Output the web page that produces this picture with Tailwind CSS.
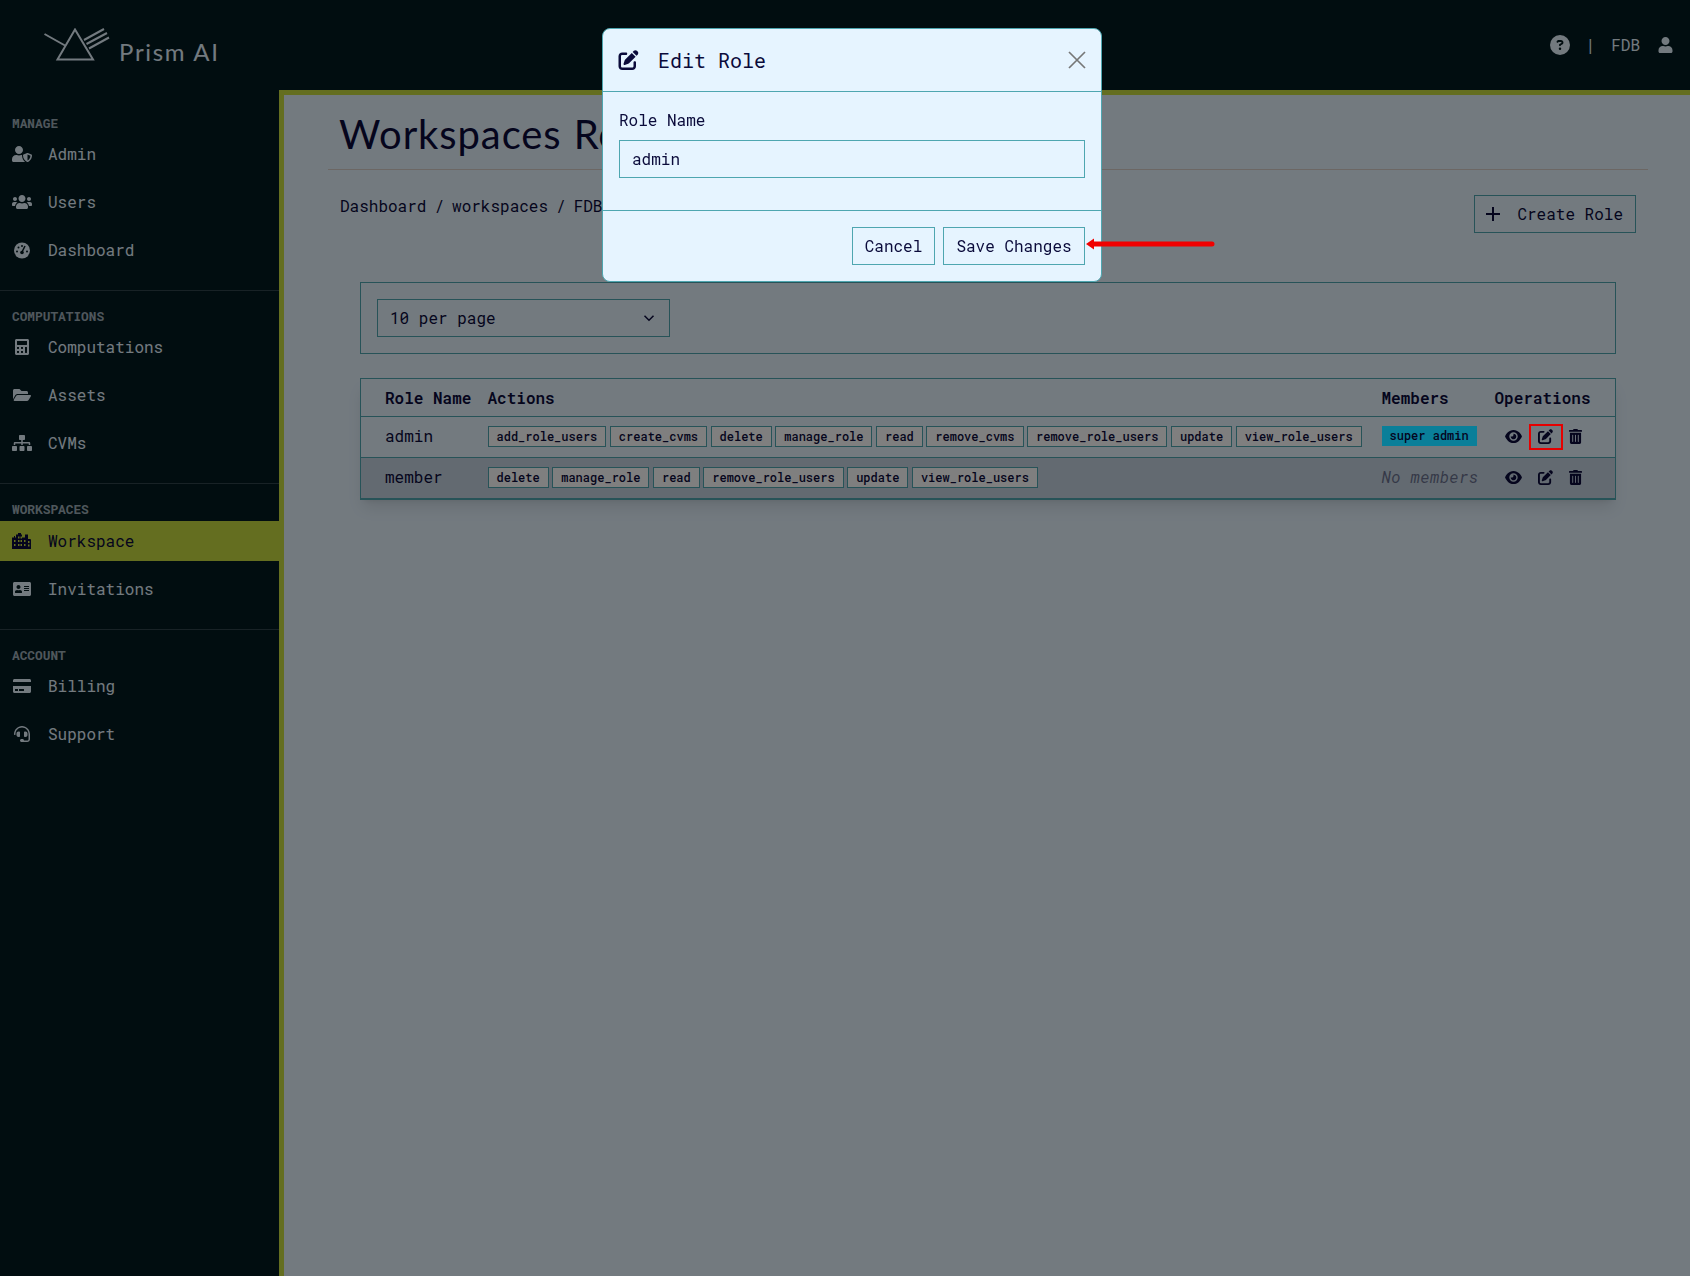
<!DOCTYPE html>
<html lang="en">
<head>
  <meta charset="UTF-8">
  <meta name="viewport" content="width=device-width, initial-scale=1.0">
  <title>Workspaces Roles</title>
  <script src="https://cdn.jsdelivr.net/npm/@tailwindcss/browser@4"></script>
</head>
<body class="bg-[#e6f4ff] text-[#0b0b3b] h-[1276px] overflow-hidden font-['Roboto_Mono','DejaVu_Sans_Mono',monospace] text-base">
  <!-- top bar -->
  <header class="h-[90px] bg-[#031a20] flex items-center justify-between text-[#e6f4ff]">
    <div class="flex items-end pl-[44px] pb-[26px] gap-[9px] h-full">
      <svg class="w-[66px] h-[36px] text-[#e6f4ff]" viewBox="0 0 66 36" fill="none" stroke="currentColor" stroke-width="2">
        <path d="M0.500 6 L21 17.500"/>
        <path d="M31 1.500 L13.500 31.500 H49 Z"/>
        <path d="M40 12 L60 1M42.500 16 L63 5M45 20.500 L65 9.500"/>
      </svg>
      <span class="font-['Lato',sans-serif] text-[24px] leading-none tracking-[1.700px]">Prism AI</span>
    </div>
    <div class="flex items-center pr-[17px]">
      <svg class="w-[20px] h-[20px]" viewBox="0 0 512 512" fill="currentColor"><path d="M256 512A256 256 0 1 0 256 0a256 256 0 1 0 0 512zM169.800 165.300c7.900-22.300 29.100-37.300 52.800-37.300h58.300c34.900 0 63.100 28.300 63.100 63.100c0 22.600-12.100 43.500-31.700 54.800L280 264.400c-.2 13-10.900 23.600-24 23.600c-13.300 0-24-10.700-24-24V250.500c0-8.600 4.600-16.500 12.100-20.800l44.300-25.400c4.700-2.700 7.600-7.700 7.600-13.100c0-8.400-6.800-15.100-15.100-15.100H222.600c-3.400 0-6.400 2.100-7.500 5.300l-.4 1.200c-4.400 12.500-18.200 19-30.600 14.600s-19-18.200-14.600-30.600l.4-1.200zM224 352a32 32 0 1 1 64 0 32 32 0 1 1 -64 0z"/></svg>
      <span class="ml-[16px]">|</span>
      <span class="ml-[16px]">FDB</span>
      <svg class="ml-[18px] w-[15px] h-[16px]" viewBox="0 0 448 512" fill="currentColor"><path d="M224 256c70.700 0 128-57.300 128-128S294.700 0 224 0 96 57.300 96 128s57.300 128 128 128zm89.600 32h-16.700c-22.200 10.200-46.900 16-72.900 16s-50.600-5.800-72.900-16h-16.700C60.200 288 0 348.200 0 422.400V464c0 26.500 21.500 48 48 48h352c26.500 0 48-21.500 48-48v-41.600c0-74.200-60.200-134.400-134.400-134.400z"/></svg>
    </div>
  </header>

  <div class="flex h-[1186px]">
    <!-- sidebar -->
    <aside class="w-[279px] shrink-0 bg-[#031a20] text-[#e6f4ff]">
      <section class="pt-[25px] pb-[20px] border-b border-[#e6f4ff]/20">
        <h6 class="h-[19px] leading-[17px] pl-[12px] text-[12.800px] font-bold text-[#e6f4ff]/70">MANAGE</h6>
        <a class="h-[40px] flex items-center pl-[12px] mb-[8px]">
          <svg class="w-[20px] h-[16px] mr-[16px]" viewBox="0 0 640 512" fill="currentColor"><path d="M622.300 271.100l-115.200-45c-4.100-1.600-12.600-3.700-22.200 0l-115.200 45c-10.700 4.200-17.700 14-17.700 24.900 0 111.600 68.700 188.800 132.900 213.900 9.600 3.700 18 1.600 22.200 0C558.400 489.900 640 420.500 640 296c0-10.900-7-20.700-17.700-24.900zM496 462.400V273.300l95.500 37.300c-5.600 87.100-60.900 135.400-95.500 151.800zM224 256c70.700 0 128-57.300 128-128S294.700 0 224 0 96 57.300 96 128s57.300 128 128 128zm96 40c0-2.500.8-4.800 1.100-7.200-2.500-.1-4.900-.8-7.500-.8h-16.700c-22.200 10.200-46.900 16-72.900 16s-50.600-5.800-72.900-16h-16.700C60.200 288 0 348.200 0 422.400V464c0 26.500 21.500 48 48 48h352c6.800 0 13.300-1.500 19.200-4-54-42.900-99.200-116.700-99.200-212z"/></svg>
          Admin
        </a>
        <a class="h-[40px] flex items-center pl-[12px] mb-[8px]">
          <svg class="w-[20px] h-[16px] mr-[16px]" viewBox="0 0 640 512" fill="currentColor"><path d="M96 224c35.300 0 64-28.700 64-64s-28.700-64-64-64-64 28.700-64 64 28.700 64 64 64zm448 0c35.300 0 64-28.700 64-64s-28.700-64-64-64-64 28.700-64 64 28.700 64 64 64zm32 32h-64c-17.600 0-33.500 7.100-45.100 18.600 40.300 22.100 68.900 62 75.100 109.400h66c17.700 0 32-14.300 32-32v-32c0-35.300-28.700-64-64-64zm-256 0c61.900 0 112-50.100 112-112S381.900 32 320 32 208 82.100 208 144s50.100 112 112 112zm76.800 32h-8.300c-20.800 10-43.900 16-68.500 16s-47.600-6-68.500-16h-8.300C179.600 288 128 339.600 128 403.200V432c0 26.500 21.500 48 48 48h288c26.500 0 48-21.500 48-48v-28.800c0-63.600-51.600-115.200-115.200-115.200zm-223.700-13.400C161.500 263.100 145.600 256 128 256H64c-35.300 0-64 28.700-64 64v32c0 17.700 14.300 32 32 32h65.900c6.300-47.400 34.900-87.300 75.200-109.400z"/></svg>
          Users
        </a>
        <a class="h-[40px] flex items-center pl-[12px]">
          <svg class="w-[20px] h-[17px] mr-[16px]" viewBox="0 0 20 16"><circle cx="10" cy="8" r="8" fill="currentColor"/><path d="M10 9.500 L13 3.500" stroke="#031a20" stroke-width="1.600"/><circle cx="10" cy="10" r="1.800" fill="#031a20"/><circle cx="5" cy="9" r="1" fill="#031a20"/><circle cx="6.500" cy="5" r="1" fill="#031a20"/><circle cx="10" cy="3.500" r="1" fill="#031a20"/><circle cx="15" cy="9" r="1" fill="#031a20"/></svg>
          Dashboard
        </a>
      </section>
      <section class="pt-[17px] pb-[20px] border-b border-[#e6f4ff]/20">
        <h6 class="h-[19px] leading-[17px] pl-[12px] text-[12.800px] font-bold text-[#e6f4ff]/70">COMPUTATIONS</h6>
        <a class="h-[40px] flex items-center pl-[12px] mb-[8px]">
          <svg class="w-[20px] h-[16px] mr-[16px]" viewBox="0 0 448 512" fill="currentColor"><path d="M400 0H48C22.400 0 0 22.400 0 48v416c0 25.600 22.400 48 48 48h352c25.600 0 48-22.400 48-48V48c0-25.600-22.400-48-48-48zM128 435.200c0 6.400-6.400 12.800-12.800 12.800H76.800c-6.400 0-12.800-6.400-12.800-12.800v-38.400c0-6.400 6.400-12.800 12.800-12.800h38.400c6.400 0 12.800 6.400 12.800 12.800v38.400zm0-128c0 6.400-6.400 12.800-12.800 12.800H76.800c-6.400 0-12.800-6.400-12.800-12.800v-38.400c0-6.400 6.400-12.800 12.800-12.800h38.400c6.400 0 12.800 6.400 12.800 12.800v38.400zm128 128c0 6.400-6.400 12.800-12.800 12.800h-38.400c-6.400 0-12.800-6.400-12.800-12.800v-38.400c0-6.400 6.400-12.800 12.800-12.800h38.400c6.400 0 12.800 6.400 12.800 12.800v38.400zm0-128c0 6.400-6.400 12.800-12.800 12.800h-38.400c-6.400 0-12.800-6.400-12.800-12.800v-38.400c0-6.400 6.400-12.800 12.800-12.800h38.400c6.400 0 12.800 6.400 12.800 12.800v38.400zm128 128c0 6.400-6.400 12.800-12.800 12.800h-38.400c-6.400 0-12.800-6.400-12.800-12.800V268.800c0-6.400 6.400-12.800 12.800-12.800h38.400c6.400 0 12.800 6.400 12.800 12.800v166.400zm0-256c0 6.400-6.400 12.800-12.800 12.800H76.800c-6.400 0-12.800-6.400-12.800-12.800V76.800C64 70.400 70.400 64 76.800 64h294.400c6.400 0 12.800 6.400 12.800 12.800v102.400z"/></svg>
          Computations
        </a>
        <a class="h-[40px] flex items-center pl-[12px] mb-[8px]">
          <svg class="w-[20px] h-[16px] mr-[16px]" viewBox="0 0 576 512" fill="currentColor"><path d="M572.694 292.093L500.270 416.248A63.997 63.997 0 0 1 444.989 448H45.025c-18.523 0-30.064-20.093-20.731-36.093l72.424-124.155A64 64 0 0 1 152 256h399.964c18.523 0 30.064 20.093 20.730 36.093zM152 224h328v-48c0-26.510-21.490-48-48-48H272l-64-64H48C21.490 64 0 85.490 0 112v278.046l69.077-118.418C86.214 242.250 117.989 224 152 224z"/></svg>
          Assets
        </a>
        <a class="h-[40px] flex items-center pl-[12px]">
          <svg class="w-[20px] h-[16px] mr-[16px]" viewBox="0 0 640 512" fill="currentColor"><path d="M128 352H32c-17.670 0-32 14.330-32 32v96c0 17.670 14.330 32 32 32h96c17.670 0 32-14.330 32-32v-96c0-17.670-14.330-32-32-32zm-24-80h192v48h48v-48h192v48h48v-57.590c0-21.170-17.230-38.410-38.410-38.410H344v-64h40c17.670 0 32-14.330 32-32V32c0-17.670-14.330-32-32-32H256c-17.670 0-32 14.330-32 32v96c0 17.670 14.330 32 32 32h40v64H94.410C73.230 224 56 241.230 56 262.410V320h48v-48zm264 80h-96c-17.670 0-32 14.330-32 32v96c0 17.670 14.330 32 32 32h96c17.670 0 32-14.330 32-32v-96c0-17.670-14.330-32-32-32zm240 0h-96c-17.670 0-32 14.330-32 32v96c0 17.670 14.330 32 32 32h96c17.670 0 32-14.330 32-32v-96c0-17.670-14.330-32-32-32z"/></svg>
          CVMs
        </a>
      </section>
      <section class="pt-[17px] pb-[20px] border-b border-[#e6f4ff]/20">
        <h6 class="h-[20px] leading-[17px] pl-[12px] text-[12.800px] font-bold text-[#e6f4ff]/70">WORKSPACES</h6>
        <a class="h-[40px] w-[284px] relative flex items-center pl-[12px] mb-[8px] bg-[#c8dc40] text-[#0b0b3b]">
          <svg class="w-[20px] h-[16px] mr-[16px]" viewBox="0 0 20 16" fill="currentColor" fill-rule="evenodd"><path d="M0 4.500h2V3h1v1.500h1V1.500h2V0h3v1.500h1v3h3V1.500h3V6h2a1 1 0 0 1 1 1v9H0z M6 3.500v2h1.500v-2z M8.500 3.500v2H10v-2z M2 7v2h1.500V7z M6 7v2h1.500V7z M8.500 7v2H10V7z M12 7v2h1.500V7z M16 8v2h1.500V8z M2 11v2h1.500v-2z M6 11v2h1.500v-2z M8.500 11v2H10v-2z M12 11v2h1.500v-2z M16 11.500v2h1.500v-2z"/></svg>
          Workspace
        </a>
        <a class="h-[40px] flex items-center pl-[12px]">
          <svg class="w-[20px] h-[16px] mr-[16px]" viewBox="0 0 576 512" fill="currentColor"><path d="M528 32H48C21.500 32 0 53.500 0 80v352c0 26.500 21.500 48 48 48h480c26.500 0 48-21.500 48-48V80c0-26.500-21.500-48-48-48zm-352 96c35.300 0 64 28.700 64 64s-28.700 64-64 64-64-28.700-64-64 28.700-64 64-64zm112 236.800c0 10.600-10 19.200-22.400 19.200H86.400C74 384 64 375.400 64 364.800v-19.200c0-31.800 30.100-57.600 67.200-57.600h5c12.300 5.100 25.700 8 39.800 8s27.600-2.900 39.800-8h5c37.100 0 67.200 25.800 67.200 57.600v19.200zM512 312c0 4.400-3.600 8-8 8H360c-4.400 0-8-3.600-8-8v-16c0-4.400 3.600-8 8-8h144c4.400 0 8 3.600 8 8v16zm0-64c0 4.400-3.600 8-8 8H360c-4.400 0-8-3.600-8-8v-16c0-4.400 3.600-8 8-8h144c4.400 0 8 3.600 8 8v16zm0-64c0 4.400-3.600 8-8 8H360c-4.400 0-8-3.600-8-8v-16c0-4.400 3.600-8 8-8h144c4.400 0 8 3.600 8 8v16z"/></svg>
          Invitations
        </a>
      </section>
      <section class="pt-[16px] pb-[20px]">
        <h6 class="h-[20px] leading-[19px] pl-[12px] text-[12.800px] font-bold text-[#e6f4ff]/70">ACCOUNT</h6>
        <a class="h-[40px] flex items-center pl-[12px] mb-[8px]">
          <svg class="w-[20px] h-[16px] mr-[16px]" viewBox="0 0 576 512" fill="currentColor"><path d="M0 432c0 26.500 21.500 48 48 48h480c26.500 0 48-21.500 48-48V256H0v176zm192-68c0-6.600 5.400-12 12-12h136c6.600 0 12 5.400 12 12v40c0 6.600-5.400 12-12 12H204c-6.600 0-12-5.400-12-12v-40zm-128 0c0-6.600 5.400-12 12-12h72c6.600 0 12 5.400 12 12v40c0 6.600-5.400 12-12 12H76c-6.600 0-12-5.400-12-12v-40zM576 80v48H0V80c0-26.500 21.500-48 48-48h480c26.500 0 48 21.500 48 48z"/></svg>
          Billing
        </a>
        <a class="h-[40px] flex items-center pl-[12px]">
          <svg class="w-[20px] h-[16px] mr-[16px]" viewBox="0 0 512 512" fill="currentColor"><path d="M192 208c0-17.670-14.330-32-32-32h-16c-35.350 0-64 28.650-64 64v48c0 35.350 28.650 64 64 64h16c17.670 0 32-14.330 32-32V208zm176 144c35.350 0 64-28.650 64-64v-48c0-35.350-28.650-64-64-64h-16c-17.670 0-32 14.330-32 32v112c0 17.670 14.330 32 32 32h16zM256 0C113.180 0 4.660 118.830 0 256v16c0 8.840 7.160 16 16 16h16c8.840 0 16-7.160 16-16v-16c0-114.690 93.310-208 208-208s208 93.310 208 208h-.12c.08 2.430.12 165.720.12 165.720 0 23.350-18.930 42.280-42.280 42.280H320c0-26.510-21.490-48-48-48h-32c-26.510 0-48 21.490-48 48s21.490 48 48 48h181.720c49.860 0 90.280-40.420 90.280-90.280V256C507.340 118.830 398.820 0 256 0z"/></svg>
          Support
        </a>
      </section>
    </aside>

    <!-- main -->
    <main class="flex-1 border-l-[5px] border-t-[5px] border-[#c8dc40] pl-[44px] pr-[42px]">
      <div class="h-[75px] border-b border-[#d8cfc8] pl-[11px] pt-[3px] flex items-center">
        <h1 class="font-['Lato',sans-serif] text-[40px] leading-none tracking-[0.900px] [word-spacing:1px]">Workspaces Roles</h1>
      </div>
      <div class="flex justify-between pl-[12px] pr-[12px] pt-[25px]">
        <ol class="flex gap-[8px] leading-[22px]">
          <li>Dashboard</li><li>/</li><li>workspaces</li><li>/</li><li>FDB</li><li>/</li><li>Roles</li>
        </ol>
        <button class="h-[38px] pl-[11px] pr-[12px] border border-[#4ea6b0] flex items-center gap-[17px]">
          <svg class="w-[14px] h-[14px]" viewBox="0 0 14 14" stroke="currentColor" stroke-width="2"><path d="M7 0v14M0 7h14"/></svg>
          Create Role
        </button>
      </div>
      <div class="mx-[32px] mt-[49px] h-[72px] border border-[#4ea6b0] px-[16px] flex items-center">
        <div class="w-[293px] h-[38px] border border-[#4ea6b0] px-[12px] flex items-center justify-between">
          <span>10 per page</span>
          <svg class="w-[12px] h-[12px] mr-[2px]" viewBox="0 0 16 16" fill="none" stroke="currentColor" stroke-width="2"><path d="M2 5l6 6 6-6"/></svg>
        </div>
      </div>
      <table class="mx-[32px] mt-[24px] w-[1256px] table-fixed border border-[#4ea6b0] border-b-2 shadow-lg border-collapse">
        <colgroup><col class="w-[127px]"><col class="w-[894px]"><col class="w-[113px]"><col></colgroup>
        <thead>
          <tr class="h-[38px] text-left">
            <th class="pl-[24px] font-semibold">Role Name</th>
            <th class="font-semibold">Actions</th>
            <th class="font-semibold">Members</th>
            <th class="font-semibold">Operations</th>
          </tr>
        </thead>
        <tbody class="[&_td]:pb-[2px]">
          <tr class="h-[41px] border-t border-[#4ea6b0]">
            <td class="pl-[24px]">admin</td>
            <td>
              <div class="flex gap-[3.500px] text-[12px] font-medium">
                <span class="h-[21px] px-[8px] leading-[19px] border border-[#4ea6b0] bg-white">add_role_users</span>
                <span class="h-[21px] px-[8px] leading-[19px] border border-[#4ea6b0] bg-white">create_cvms</span>
                <span class="h-[21px] px-[8px] leading-[19px] border border-[#4ea6b0] bg-white">delete</span>
                <span class="h-[21px] px-[8px] leading-[19px] border border-[#4ea6b0] bg-white">manage_role</span>
                <span class="h-[21px] px-[8px] leading-[19px] border border-[#4ea6b0] bg-white">read</span>
                <span class="h-[21px] px-[8px] leading-[19px] border border-[#4ea6b0] bg-white">remove_cvms</span>
                <span class="h-[21px] px-[8px] leading-[19px] border border-[#4ea6b0] bg-white">remove_role_users</span>
                <span class="h-[21px] px-[8px] leading-[19px] border border-[#4ea6b0] bg-white">update</span>
                <span class="h-[21px] px-[8px] leading-[19px] border border-[#4ea6b0] bg-white">view_role_users</span>
              </div>
            </td>
            <td><span class="relative z-10 block -mt-[1px] w-[95px] h-[20px] pl-[8px] leading-[18px] text-[12px] font-medium text-[#05051e] bg-[#0a7f99]">super admin</span></td>
            <td>
              <div class="flex items-center pl-[10px] gap-[15px]">
                <svg class="w-[17px] h-[15px]" viewBox="0 0 576 512" fill="currentColor"><path d="M288 32c-80.800 0-145.500 36.800-192.600 80.600C48.600 156 17.300 208 2.500 243.700c-3.300 7.900-3.300 16.700 0 24.600C17.300 304 48.600 356 95.400 399.400C142.500 443.200 207.200 480 288 480s145.500-36.800 192.600-80.600c46.800-43.500 78.100-95.400 93-131.100c3.300-7.900 3.300-16.700 0-24.600c-14.900-35.700-46.200-87.700-93-131.100C433.500 68.800 368.800 32 288 32zM144 256a144 144 0 1 1 288 0 144 144 0 1 1 -288 0zm144-64c0 35.300-28.700 64-64 64c-7.100 0-13.900-1.200-20.300-3.300c-5.500-1.800-11.900 1.600-11.700 7.400c.3 6.900 1.300 13.800 3.200 20.700c13.700 51.200 66.400 81.600 117.600 67.900s81.600-66.400 67.900-117.600c-11.100-41.500-47.800-69.400-88.600-71.100c-5.800-.2-9.200 6.100-7.400 11.700c2.100 6.400 3.300 13.200 3.300 20.300z"/></svg>
                <svg class="w-[17px] h-[15px]" viewBox="0 0 512 512" fill="currentColor"><path d="M471.600 21.700c-21.900-21.900-57.300-21.900-79.200 0L362.300 51.700l97.900 97.900 30.100-30.100c21.900-21.900 21.900-57.300 0-79.200L471.600 21.700zm-299.200 220c-6.100 6.100-10.800 13.600-13.500 21.900l-29.600 88.800c-2.900 8.600-.6 18.100 5.800 24.600s15.900 8.700 24.600 5.800l88.800-29.600c8.200-2.700 15.700-7.400 21.900-13.500L437.700 172.300 339.700 74.300 172.400 241.700zM96 64C43 64 0 107 0 160V416c0 53 43 96 96 96H352c53 0 96-43 96-96V320c0-17.700-14.300-32-32-32s-32 14.300-32 32v96c0 17.700-14.300 32-32 32H96c-17.700 0-32-14.300-32-32V160c0-17.700 14.300-32 32-32h96c17.700 0 32-14.300 32-32s-14.300-32-32-32H96z"/></svg>
                <svg class="w-[13px] h-[15px]" viewBox="0 0 448 512" fill="currentColor"><path d="M32 464a48 48 0 0 0 48 48h288a48 48 0 0 0 48-48V128H32zm272-256a16 16 0 0 1 32 0v224a16 16 0 0 1-32 0zm-96 0a16 16 0 0 1 32 0v224a16 16 0 0 1-32 0zm-96 0a16 16 0 0 1 32 0v224a16 16 0 0 1-32 0zM432 32H312l-9.400-18.700A24 24 0 0 0 281.100 0H166.800a23.720 23.720 0 0 0-21.400 13.300L136 32H16A16 16 0 0 0 0 48v32a16 16 0 0 0 16 16h416a16 16 0 0 0 16-16V48a16 16 0 0 0-16-16z"/></svg>
              </div>
            </td>
          </tr>
          <tr class="h-[41px] border-t border-[#4ea6b0] bg-[#c6d4e2]">
            <td class="pl-[24px]">member</td>
            <td>
              <div class="flex mt-[2px] gap-[3.500px] text-[12px] font-medium">
                <span class="h-[21px] px-[8px] leading-[19px] border border-[#4ea6b0] bg-white">delete</span>
                <span class="h-[21px] px-[8px] leading-[19px] border border-[#4ea6b0] bg-white">manage_role</span>
                <span class="h-[21px] px-[8px] leading-[19px] border border-[#4ea6b0] bg-white">read</span>
                <span class="h-[21px] px-[8px] leading-[19px] border border-[#4ea6b0] bg-white">remove_role_users</span>
                <span class="h-[21px] px-[8px] leading-[19px] border border-[#4ea6b0] bg-white">update</span>
                <span class="h-[21px] px-[8px] leading-[19px] border border-[#4ea6b0] bg-white">view_role_users</span>
              </div>
            </td>
            <td class="italic tracking-[0.300px] text-[#0b0b3b]/50">No members</td>
            <td>
              <div class="flex items-center mt-[2px] pl-[10px] gap-[15px]">
                <svg class="w-[17px] h-[15px]" viewBox="0 0 576 512" fill="currentColor"><path d="M288 32c-80.800 0-145.500 36.800-192.600 80.600C48.600 156 17.300 208 2.500 243.700c-3.300 7.900-3.300 16.700 0 24.600C17.300 304 48.600 356 95.400 399.400C142.500 443.200 207.200 480 288 480s145.500-36.800 192.600-80.600c46.800-43.500 78.100-95.400 93-131.100c3.300-7.900 3.300-16.700 0-24.600c-14.900-35.700-46.200-87.700-93-131.100C433.500 68.800 368.800 32 288 32zM144 256a144 144 0 1 1 288 0 144 144 0 1 1 -288 0zm144-64c0 35.300-28.700 64-64 64c-7.100 0-13.900-1.200-20.300-3.300c-5.500-1.800-11.900 1.600-11.700 7.400c.3 6.900 1.300 13.800 3.200 20.700c13.700 51.200 66.400 81.600 117.600 67.900s81.600-66.400 67.900-117.600c-11.100-41.500-47.800-69.400-88.600-71.100c-5.800-.2-9.200 6.100-7.400 11.700c2.100 6.400 3.300 13.200 3.300 20.300z"/></svg>
                <svg class="w-[17px] h-[15px]" viewBox="0 0 512 512" fill="currentColor"><path d="M471.600 21.700c-21.900-21.900-57.300-21.900-79.200 0L362.300 51.700l97.900 97.900 30.100-30.100c21.900-21.900 21.900-57.300 0-79.200L471.600 21.700zm-299.200 220c-6.100 6.100-10.800 13.600-13.500 21.900l-29.600 88.800c-2.900 8.600-.6 18.100 5.800 24.600s15.900 8.700 24.600 5.800l88.800-29.600c8.200-2.700 15.700-7.400 21.900-13.500L437.700 172.300 339.700 74.300 172.400 241.700zM96 64C43 64 0 107 0 160V416c0 53 43 96 96 96H352c53 0 96-43 96-96V320c0-17.700-14.300-32-32-32s-32 14.300-32 32v96c0 17.700-14.300 32-32 32H96c-17.700 0-32-14.300-32-32V160c0-17.700 14.300-32 32-32h96c17.700 0 32-14.300 32-32s-14.300-32-32-32H96z"/></svg>
                <svg class="w-[13px] h-[15px]" viewBox="0 0 448 512" fill="currentColor"><path d="M32 464a48 48 0 0 0 48 48h288a48 48 0 0 0 48-48V128H32zm272-256a16 16 0 0 1 32 0v224a16 16 0 0 1-32 0zm-96 0a16 16 0 0 1 32 0v224a16 16 0 0 1-32 0zm-96 0a16 16 0 0 1 32 0v224a16 16 0 0 1-32 0zM432 32H312l-9.400-18.700A24 24 0 0 0 281.100 0H166.800a23.720 23.720 0 0 0-21.400 13.300L136 32H16A16 16 0 0 0 0 48v32a16 16 0 0 0 16 16h416a16 16 0 0 0 16-16V48a16 16 0 0 0-16-16z"/></svg>
              </div>
            </td>
          </tr>
        </tbody>
      </table>
    </main>
  </div>

  <!-- backdrop -->
  <div class="fixed inset-0 bg-black/50"></div>

  <!-- edit role modal -->
  <div class="fixed z-20 left-[602px] top-[28px] w-[500px] h-[254px] bg-[#e6f4ff] border border-[#4ea6b0] rounded-lg flex flex-col">
    <div class="h-[63px] border-b border-[#4ea6b0] flex items-center pl-[15px] pr-[15px]">
      <svg class="w-[21px] h-[20px] mr-[19px]" viewBox="0 0 512 512" fill="currentColor"><path d="M471.600 21.700c-21.900-21.900-57.300-21.900-79.200 0L362.300 51.700l97.900 97.900 30.100-30.100c21.900-21.900 21.900-57.300 0-79.200L471.600 21.700zm-299.200 220c-6.100 6.100-10.800 13.600-13.500 21.900l-29.600 88.800c-2.900 8.600-.6 18.100 5.800 24.600s15.900 8.700 24.600 5.800l88.800-29.600c8.200-2.700 15.700-7.400 21.900-13.500L437.700 172.300 339.700 74.300 172.400 241.700zM96 64C43 64 0 107 0 160V416c0 53 43 96 96 96H352c53 0 96-43 96-96V320c0-17.700-14.300-32-32-32s-32 14.300-32 32v96c0 17.700-14.300 32-32 32H96c-17.700 0-32-14.300-32-32V160c0-17.700 14.300-32 32-32h96c17.700 0 32-14.300 32-32s-14.300-32-32-32H96z"/></svg>
      <h5 class="text-[20px] font-normal flex-1">Edit Role</h5>
      <svg class="w-[18px] h-[18px] text-[#777]" viewBox="0 0 18 18" stroke="currentColor" stroke-width="1.700"><path d="M1 1l16 16M17 1L1 17"/></svg>
    </div>
    <div class="h-[119px] border-b border-[#4ea6b0] px-[16px] pt-[16px]">
      <label class="block leading-[24px] mb-[8px]">Role Name</label>
      <input type="text" value="admin" class="w-[466px] h-[38px] px-[12px] pb-[2px] border border-[#4ea6b0]">
    </div>
    <div class="flex justify-end gap-[8px] px-[16px] pt-[16px]">
      <button class="h-[38px] w-[83px] border border-[#4ea6b0]">Cancel</button>
      <button class="h-[38px] w-[142px] border border-[#4ea6b0]">Save Changes</button>
    </div>
  </div>

  <!-- red annotations -->
  <div class="fixed z-30 left-[1529px] top-[424px] w-[34px] h-[26px] border-2 border-[#e60000]"></div>
  <svg class="fixed z-30 left-[1083px] top-[236px]" width="132" height="16" viewBox="0 0 132 16"><path d="M3 8l8-5.500v3h118a2.500 2.500 0 0 1 0 5H11v3z" fill="#f00000"/></svg>
</body>
</html>
